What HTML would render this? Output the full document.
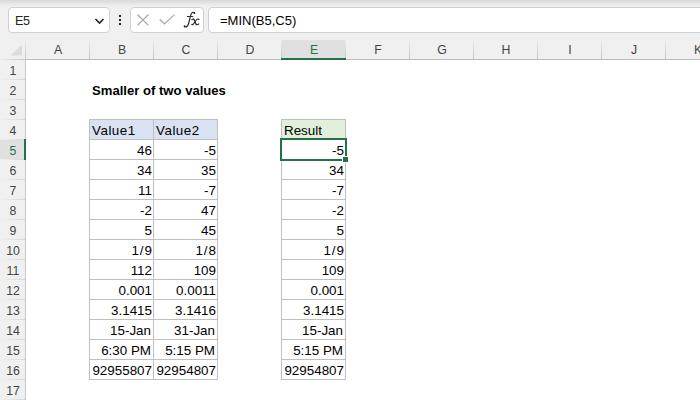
<!DOCTYPE html><html><head><meta charset="utf-8"><style>
*{margin:0;padding:0;box-sizing:border-box}
html,body{width:700px;height:400px;overflow:hidden;background:#fff;font-family:"Liberation Sans",sans-serif}
.a{position:absolute}
.top{left:0;top:0;width:700px;height:33px;background:#f0f0f0}
.topsh{left:0;top:0;width:700px;height:6px;background:linear-gradient(#d9d9d9,#efefef)}
.box{background:#fff;border:1px solid #d1d1d1;border-radius:4px}
.hdr{left:0;top:33px;width:700px;height:27px;background:#f0f0f0}
.rh{left:0;top:60px;width:26px;height:340px;background:#f0f0f0}
.vl{width:1px;background:#c6c6c6}
.vg{width:1px;background:linear-gradient(#ececec,#c4c4c4)}
.hl{height:1px;background:#c6c6c6}
.ch{font-size:12.3px;color:#444;text-align:center;width:64px;line-height:21px}
.rn{font-size:12.3px;color:#444;text-align:center;width:26px;line-height:22px}
.c{font-size:13.4px;color:#000;line-height:20px;white-space:nowrap}
.r{text-align:right}
.tb{background:#bfbfbf}
</style></head><body><div class="a top"></div><div class="a topsh"></div>
<div class="a box" style="left:8px;top:7px;width:102px;height:26px"></div>
<div class="a" style="left:15px;top:7px;line-height:28px;font-size:12.6px;letter-spacing:-0.5px;color:#222">E5</div>
<svg class="a" style="left:94px;top:17px" width="11" height="8" viewBox="0 0 11 8"><path d="M1.5 2 L5.5 6 L9.5 2" fill="none" stroke="#222" stroke-width="1.6"/></svg>
<div class="a" style="left:119px;top:15px;width:2px;height:2px;background:#222"></div>
<div class="a" style="left:119px;top:19px;width:2px;height:2px;background:#222"></div>
<div class="a" style="left:119px;top:23px;width:2px;height:2px;background:#222"></div>
<div class="a box" style="left:130px;top:7px;width:74px;height:26px"></div>
<svg class="a" style="left:136px;top:13px" width="14" height="14" viewBox="0 0 14 14"><path d="M1.4 1.5 L12.5 12.4 M12.5 1.5 L1.4 12.4" stroke="#a8a8a8" stroke-width="1.25" fill="none"/></svg>
<svg class="a" style="left:158px;top:13px" width="18" height="13" viewBox="0 0 18 13"><path d="M1.8 6.3 L6.4 10.9 L16.5 1.6" stroke="#a8a8a8" stroke-width="1.25" fill="none"/></svg>
<svg class="a" style="left:178px;top:8px" width="26" height="24" viewBox="0 0 26 24"><g fill="none" stroke="#2a2a2a" stroke-linecap="round"><path d="M16.6 5.3 C16.2 4.2 14.8 3.9 13.9 4.8 C13.0 5.7 12.6 7.5 12.2 9.2 L10.9 14.5 C10.3 17 9.5 18.5 8.2 18.9 C7.4 19.1 6.8 18.9 6.5 18.4" stroke-width="1.15"/><path d="M9.3 8.5 L14.7 8.5" stroke-width="1"/><g transform="translate(0.6 0)"><path d="M13.3 11.6 C14.6 10.8 15.4 11.1 15.9 12.4 L17.2 15.8 C17.7 16.9 18.7 16.9 20.1 16" stroke-width="1.25"/><path d="M20.1 11.3 C19.3 10.7 18.3 11.2 17.3 12.5 L15.1 15.6 C14.5 16.5 14 16.9 13.4 16.6" stroke-width="1.1"/></g></g><circle cx="16.3" cy="5" r="0.95" fill="#2a2a2a"/><circle cx="6.6" cy="18.3" r="0.95" fill="#2a2a2a"/><circle cx="20.6" cy="11.4" r="0.7" fill="#2a2a2a"/><circle cx="14.1" cy="16.5" r="0.7" fill="#2a2a2a"/></svg>
<div class="a box" style="left:208px;top:7px;width:520px;height:26px"></div>
<div class="a" style="left:220px;top:7px;line-height:28px;font-size:13px;color:#000">=MIN(B5,C5)</div>
<div class="a hdr"></div><div class="a rh"></div>
<div class="a" style="left:281px;top:40px;width:65px;height:20px;background:#e0e0e0"></div>
<div class="a" style="left:0;top:139px;width:26px;height:21px;background:#e0e0e0"></div>
<svg class="a" style="left:0;top:40px" width="26" height="20"><path d="M22 4.75 L22 15.6 L10.5 15.6 Z" fill="#dcdcdc"/></svg>
<div class="a vg" style="left:25px;top:40px;height:19px"></div>
<div class="a vg" style="left:89px;top:40px;height:19px"></div>
<div class="a vg" style="left:153px;top:40px;height:19px"></div>
<div class="a vg" style="left:217px;top:40px;height:19px"></div>
<div class="a vg" style="left:281px;top:40px;height:19px"></div>
<div class="a vg" style="left:345px;top:40px;height:19px"></div>
<div class="a vg" style="left:409px;top:40px;height:19px"></div>
<div class="a vg" style="left:473px;top:40px;height:19px"></div>
<div class="a vg" style="left:537px;top:40px;height:19px"></div>
<div class="a vg" style="left:601px;top:40px;height:19px"></div>
<div class="a vg" style="left:665px;top:40px;height:19px"></div>
<div class="a hl" style="left:0;top:59px;width:26px;background:linear-gradient(90deg,#ececec,#c0c0c0)"></div>
<div class="a hl" style="left:26px;top:59px;width:674px;background:#bdbdbd"></div>
<div class="a vl" style="left:25px;top:59px;height:341px"></div>
<div class="a hl" style="left:0;top:79px;width:25px;background:linear-gradient(90deg,#f0f0f0,#d6d6d6)"></div>
<div class="a hl" style="left:0;top:99px;width:25px;background:linear-gradient(90deg,#f0f0f0,#d6d6d6)"></div>
<div class="a hl" style="left:0;top:119px;width:25px;background:linear-gradient(90deg,#f0f0f0,#d6d6d6)"></div>
<div class="a hl" style="left:0;top:139px;width:25px;background:linear-gradient(90deg,#f0f0f0,#d6d6d6)"></div>
<div class="a hl" style="left:0;top:159px;width:25px;background:linear-gradient(90deg,#f0f0f0,#d6d6d6)"></div>
<div class="a hl" style="left:0;top:179px;width:25px;background:linear-gradient(90deg,#f0f0f0,#d6d6d6)"></div>
<div class="a hl" style="left:0;top:199px;width:25px;background:linear-gradient(90deg,#f0f0f0,#d6d6d6)"></div>
<div class="a hl" style="left:0;top:219px;width:25px;background:linear-gradient(90deg,#f0f0f0,#d6d6d6)"></div>
<div class="a hl" style="left:0;top:239px;width:25px;background:linear-gradient(90deg,#f0f0f0,#d6d6d6)"></div>
<div class="a hl" style="left:0;top:259px;width:25px;background:linear-gradient(90deg,#f0f0f0,#d6d6d6)"></div>
<div class="a hl" style="left:0;top:279px;width:25px;background:linear-gradient(90deg,#f0f0f0,#d6d6d6)"></div>
<div class="a hl" style="left:0;top:299px;width:25px;background:linear-gradient(90deg,#f0f0f0,#d6d6d6)"></div>
<div class="a hl" style="left:0;top:319px;width:25px;background:linear-gradient(90deg,#f0f0f0,#d6d6d6)"></div>
<div class="a hl" style="left:0;top:339px;width:25px;background:linear-gradient(90deg,#f0f0f0,#d6d6d6)"></div>
<div class="a hl" style="left:0;top:359px;width:25px;background:linear-gradient(90deg,#f0f0f0,#d6d6d6)"></div>
<div class="a hl" style="left:0;top:379px;width:25px;background:linear-gradient(90deg,#f0f0f0,#d6d6d6)"></div>
<div class="a hl" style="left:0;top:399px;width:25px;background:linear-gradient(90deg,#f0f0f0,#d6d6d6)"></div>
<div class="a" style="left:281px;top:58px;width:65px;height:2px;background:#217346"></div>
<div class="a" style="left:24px;top:139px;width:2px;height:21px;background:#217346"></div>
<div class="a ch" style="left:26px;top:40px;color:#444">A</div>
<div class="a ch" style="left:90px;top:40px;color:#444">B</div>
<div class="a ch" style="left:154px;top:40px;color:#444">C</div>
<div class="a ch" style="left:218px;top:40px;color:#444">D</div>
<div class="a ch" style="left:282px;top:40px;color:#217346">E</div>
<div class="a ch" style="left:346px;top:40px;color:#444">F</div>
<div class="a ch" style="left:410px;top:40px;color:#444">G</div>
<div class="a ch" style="left:474px;top:40px;color:#444">H</div>
<div class="a ch" style="left:538px;top:40px;color:#444">I</div>
<div class="a ch" style="left:602px;top:40px;color:#444">J</div>
<div class="a ch" style="left:666px;top:40px;color:#444">K</div>
<div class="a rn" style="left:0;top:60px;color:#444">1</div>
<div class="a rn" style="left:0;top:80px;color:#444">2</div>
<div class="a rn" style="left:0;top:100px;color:#444">3</div>
<div class="a rn" style="left:0;top:120px;color:#444">4</div>
<div class="a rn" style="left:0;top:140px;color:#217346">5</div>
<div class="a rn" style="left:0;top:160px;color:#444">6</div>
<div class="a rn" style="left:0;top:180px;color:#444">7</div>
<div class="a rn" style="left:0;top:200px;color:#444">8</div>
<div class="a rn" style="left:0;top:220px;color:#444">9</div>
<div class="a rn" style="left:0;top:240px;color:#444">10</div>
<div class="a rn" style="left:0;top:260px;color:#444">11</div>
<div class="a rn" style="left:0;top:280px;color:#444">12</div>
<div class="a rn" style="left:0;top:300px;color:#444">13</div>
<div class="a rn" style="left:0;top:320px;color:#444">14</div>
<div class="a rn" style="left:0;top:340px;color:#444">15</div>
<div class="a rn" style="left:0;top:360px;color:#444">16</div>
<div class="a rn" style="left:0;top:380px;color:#444">17</div>
<div class="a c" style="left:92px;top:81px;font-weight:bold;font-size:13.1px">Smaller of two values</div>
<div class="a" style="left:89px;top:119px;width:129px;height:21px;background:#d9e1f2"></div>
<div class="a" style="left:281px;top:119px;width:65px;height:21px;background:#e2efda"></div>
<div class="a tb" style="left:89px;top:119px;width:1px;height:261px"></div>
<div class="a tb" style="left:153px;top:119px;width:1px;height:261px"></div>
<div class="a tb" style="left:217px;top:119px;width:1px;height:261px"></div>
<div class="a tb" style="left:89px;top:119px;width:129px;height:1px"></div>
<div class="a tb" style="left:89px;top:139px;width:129px;height:1px"></div>
<div class="a tb" style="left:89px;top:159px;width:129px;height:1px"></div>
<div class="a tb" style="left:89px;top:179px;width:129px;height:1px"></div>
<div class="a tb" style="left:89px;top:199px;width:129px;height:1px"></div>
<div class="a tb" style="left:89px;top:219px;width:129px;height:1px"></div>
<div class="a tb" style="left:89px;top:239px;width:129px;height:1px"></div>
<div class="a tb" style="left:89px;top:259px;width:129px;height:1px"></div>
<div class="a tb" style="left:89px;top:279px;width:129px;height:1px"></div>
<div class="a tb" style="left:89px;top:299px;width:129px;height:1px"></div>
<div class="a tb" style="left:89px;top:319px;width:129px;height:1px"></div>
<div class="a tb" style="left:89px;top:339px;width:129px;height:1px"></div>
<div class="a tb" style="left:89px;top:359px;width:129px;height:1px"></div>
<div class="a tb" style="left:89px;top:379px;width:129px;height:1px"></div>
<div class="a tb" style="left:281px;top:119px;width:1px;height:261px"></div>
<div class="a tb" style="left:345px;top:119px;width:1px;height:261px"></div>
<div class="a tb" style="left:281px;top:119px;width:65px;height:1px"></div>
<div class="a tb" style="left:281px;top:139px;width:65px;height:1px"></div>
<div class="a tb" style="left:281px;top:159px;width:65px;height:1px"></div>
<div class="a tb" style="left:281px;top:179px;width:65px;height:1px"></div>
<div class="a tb" style="left:281px;top:199px;width:65px;height:1px"></div>
<div class="a tb" style="left:281px;top:219px;width:65px;height:1px"></div>
<div class="a tb" style="left:281px;top:239px;width:65px;height:1px"></div>
<div class="a tb" style="left:281px;top:259px;width:65px;height:1px"></div>
<div class="a tb" style="left:281px;top:279px;width:65px;height:1px"></div>
<div class="a tb" style="left:281px;top:299px;width:65px;height:1px"></div>
<div class="a tb" style="left:281px;top:319px;width:65px;height:1px"></div>
<div class="a tb" style="left:281px;top:339px;width:65px;height:1px"></div>
<div class="a tb" style="left:281px;top:359px;width:65px;height:1px"></div>
<div class="a tb" style="left:281px;top:379px;width:65px;height:1px"></div>
<div class="a c" style="left:92px;top:121px;letter-spacing:0.5px">Value1</div>
<div class="a c" style="left:156px;top:121px;letter-spacing:0.5px">Value2</div>
<div class="a c" style="left:284px;top:121px">Result</div>
<div class="a c r" style="right:548px;top:141px">46</div>
<div class="a c r" style="right:484px;top:141px">-5</div>
<div class="a c r" style="right:356px;top:141px">-5</div>
<div class="a c r" style="right:548px;top:161px">34</div>
<div class="a c r" style="right:484px;top:161px">35</div>
<div class="a c r" style="right:356px;top:161px">34</div>
<div class="a c r" style="right:548px;top:181px">11</div>
<div class="a c r" style="right:484px;top:181px">-7</div>
<div class="a c r" style="right:356px;top:181px">-7</div>
<div class="a c r" style="right:548px;top:201px">-2</div>
<div class="a c r" style="right:484px;top:201px">47</div>
<div class="a c r" style="right:356px;top:201px">-2</div>
<div class="a c r" style="right:548px;top:221px">5</div>
<div class="a c r" style="right:484px;top:221px">45</div>
<div class="a c r" style="right:356px;top:221px">5</div>
<div class="a c r" style="right:547px;top:241px;letter-spacing:1px">1/9</div>
<div class="a c r" style="right:483px;top:241px;letter-spacing:1px">1/8</div>
<div class="a c r" style="right:355px;top:241px;letter-spacing:1px">1/9</div>
<div class="a c r" style="right:548px;top:261px">112</div>
<div class="a c r" style="right:484px;top:261px">109</div>
<div class="a c r" style="right:356px;top:261px">109</div>
<div class="a c r" style="right:548px;top:281px">0.001</div>
<div class="a c r" style="right:484px;top:281px">0.0011</div>
<div class="a c r" style="right:356px;top:281px">0.001</div>
<div class="a c r" style="right:548px;top:301px">3.1415</div>
<div class="a c r" style="right:484px;top:301px">3.1416</div>
<div class="a c r" style="right:356px;top:301px">3.1415</div>
<div class="a c r" style="right:549px;top:321px">15-Jan</div>
<div class="a c r" style="right:485px;top:321px">31-Jan</div>
<div class="a c r" style="right:357px;top:321px">15-Jan</div>
<div class="a c r" style="right:549px;top:341px">6:30 PM</div>
<div class="a c r" style="right:485px;top:341px">5:15 PM</div>
<div class="a c r" style="right:357px;top:341px">5:15 PM</div>
<div class="a c r" style="right:548px;top:361px">92955807</div>
<div class="a c r" style="right:484px;top:361px">92954807</div>
<div class="a c r" style="right:356px;top:361px">92954807</div>
<div class="a" style="left:280px;top:138px;width:67px;height:23px;border:2px solid #217346"></div>
<div class="a" style="left:342px;top:156px;width:7px;height:7px;background:#fff"></div>
<div class="a" style="left:343px;top:157px;width:5px;height:5px;background:#217346"></div></body></html>
